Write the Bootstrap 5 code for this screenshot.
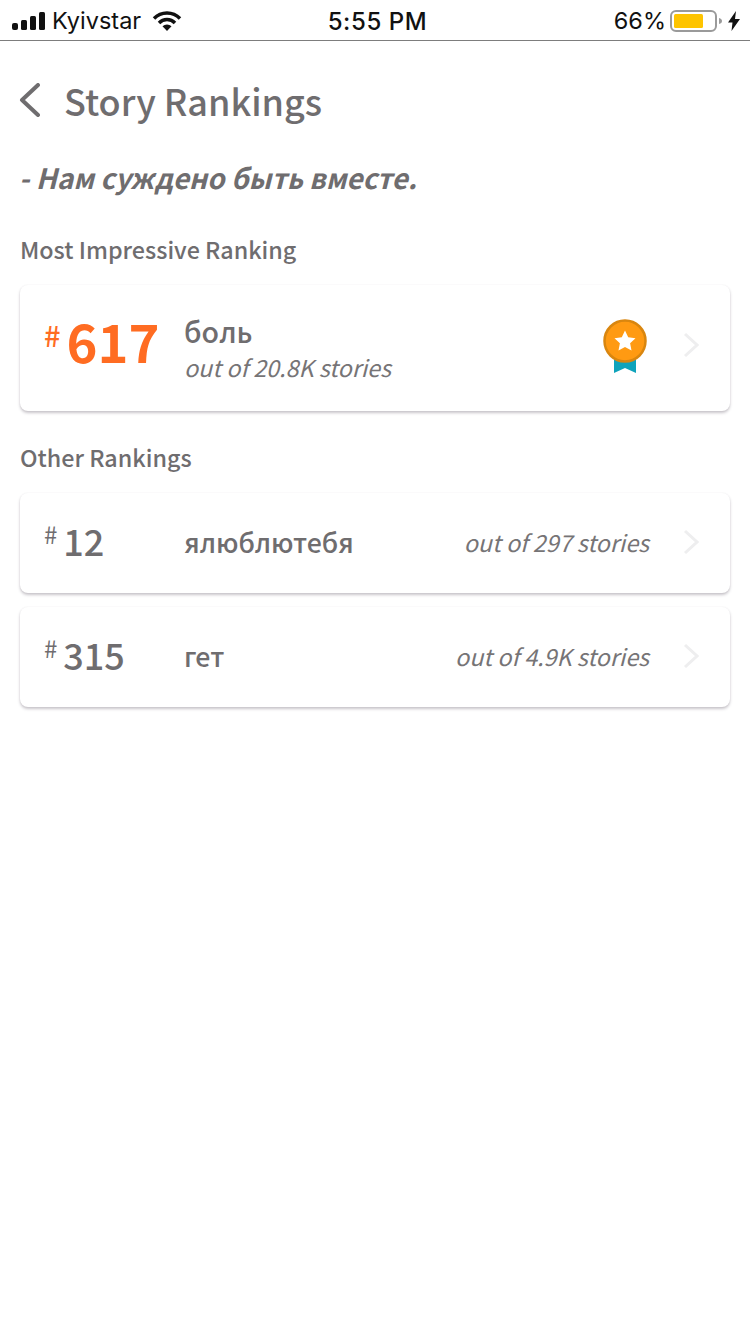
<!DOCTYPE html>
<html lang="en">
<head>
  <meta charset="UTF-8" />
  <title>Story Rankings</title>
  <link href="https://cdn.jsdelivr.net/npm/bootstrap@5.3.0/dist/css/bootstrap.min.css" rel="stylesheet" />
  <style>
    body {
      background-color: #fff;
      color: #6f6d6f;
      font-family: "Noto Sans CJK SC", "Noto Sans", sans-serif;
      padding-bottom: 40px;
    }
    .status-bar {
      height: 41px;
      padding: 1px 10px 0 12px;
      border-bottom: 1px solid #7d7d7d;
      color: #111;
      font-family: "Inter", "Liberation Sans", sans-serif;
      font-size: 23.5px;
      line-height: 38px;
    }
    .status-side { width: 250px; }
    .status-time { font-size: 24px; font-weight: 500; letter-spacing: .6px; padding: 2px 0 0 3px; }
    .wifi-gap { margin-left: 11px; }
    .battery-gap { margin-left: 4px; }
    .bolt-gap { margin-left: 6px; }
    .page-title {
      font-size: 36px;
      font-weight: 500;
      line-height: 48px;
      margin: 0;
    }
    .title-bar {
      padding: 35px 20px 0 18px;
      gap: 24px;
    }
    .story-name {
      font-size: 27.9px;
      font-style: italic;
      font-weight: 700;
      line-height: 36px;
      margin: 35px 0 0 19px;
    }
    .section-label {
      font-size: 23.3px;
      font-weight: 500;
      line-height: 32px;
      margin: 38px 0 20px 20px;
    }
    .section-second { margin-top: 30px; }
    .rank-box {
      background: #fff;
      border: 0;
      border-radius: 8px;
      box-shadow: 0 2px 3px rgba(60, 50, 70, .28), 0 0 2px rgba(60, 50, 70, .06);
      margin: 0 20px;
      padding: 0 31px 0 24px;
    }
    .rank-main { height: 126px; }
    .rank-other { height: 100px; }
    .rank-other + .rank-other { margin-top: 14px; }
    .rank-num {
      width: 140px;
      flex-shrink: 0;
      font-weight: 500;
      font-size: 36px;
      line-height: 1;
      margin-bottom: 6px;
    }
    .rank-num sup {
      font-size: 24px;
      font-weight: 400;
      top: -12px;
      vertical-align: baseline;
      position: relative;
      margin-right: 6px;
    }
    .rank-main .rank-num {
      color: #ff6c22;
      font-size: 52.5px;
      font-weight: 700;
      margin-bottom: 16px;
    }
    .rank-main .rank-num sup { font-size: 29px; font-weight: 500; top: -16px; margin-right: 6px; }
    .tag-name { font-size: 26.7px; font-weight: 500; line-height: 34px; margin-bottom: 2px; }
    .rank-main .tag-name { font-size: 28.5px; margin-bottom: 0; }
    .out-of { font-size: 23.3px; font-style: italic; line-height: 34px; font-weight: 400; color: #767476; margin-bottom: 2px; }
    .rank-main .out-of { margin: 2px 0 0; }
    .tag-block { margin-top: 2px; }
    .chev-gap { margin-left: 34px; margin-bottom: 2px; }
    .medal-gap { margin-right: 36px; margin-bottom: 2px; }
    .chev-main { margin-bottom: 6px; }
  </style>
</head>
<body>

<div class="status-bar d-flex justify-content-between align-items-center">
  <div class="status-side d-flex align-items-center">
    <svg width="36" height="18" viewBox="0 0 36 18"><rect x="0" y="11" width="6" height="7" rx="2" fill="#111"/><rect x="9" y="8" width="6" height="10" rx="1.5" fill="#111"/><rect x="18" y="4" width="6" height="14" rx="1.5" fill="#111"/><rect x="27" y="0" width="6" height="18" rx="1.5" fill="#111"/></svg>
    <span class="ms-1">Kyivstar</span>
    <svg class="wifi-gap" width="30" height="22" viewBox="0 0 30 22"><path d="M2 8.5a18 18 0 0 1 26 0" fill="none" stroke="#111" stroke-width="3.4"/><path d="M7 13a11 11 0 0 1 16 0" fill="none" stroke="#111" stroke-width="3.4"/><path d="M15 21l-4.500-4.700a6.500 6.500 0 0 1 9 0z" fill="#111"/></svg>
  </div>
  <div class="status-time">5:55 PM</div>
  <div class="status-side d-flex align-items-center justify-content-end">
    <span>66%</span>
    <svg class="battery-gap" width="52" height="24" viewBox="0 0 52 24"><rect x="1" y="2" width="45" height="20" rx="5" fill="#fff" stroke="#9a9a9a" stroke-width="2"/><rect x="4" y="5" width="29" height="14" rx="1.500" fill="#fec400"/><path d="M49 9c2 .5 3 1.500 3 3s-1 2.500-3 3z" fill="#9a9a9a"/></svg>
    <svg class="bolt-gap" width="12" height="20" viewBox="0 0 12 20"><path d="M8 0 0 11.500h4.500L3.500 20 12 8H7z" fill="#111"/></svg>
  </div>
</div>

<div class="title-bar d-flex align-items-center">
  <svg width="22" height="34" viewBox="0 0 22 34"><path d="M20 2 4 17l16 15" fill="none" stroke="#6f6d6f" stroke-width="4" stroke-linecap="round" stroke-linejoin="round"/></svg>
  <h1 class="page-title">Story Rankings</h1>
</div>

<p class="story-name">- Нам суждено быть вместе.</p>

<h2 class="section-label section-first">Most Impressive Ranking</h2>
<div class="card rank-box rank-main flex-row align-items-center">
  <div class="rank-num"><sup>#</sup>617</div>
  <div class="tag-block flex-grow-1">
    <div class="tag-name">боль</div>
    <div class="out-of">out of 20.8K stories</div>
  </div>
  <svg class="medal-gap" width="44" height="56" viewBox="0 0 44 56">
    <path d="M11 30h22v24l-11-5-11 5z" fill="#0fa3bb"/>
    <circle cx="22" cy="22" r="20.500" fill="#ff9a12" stroke="#d9860f" stroke-width="2.500"/>
    <path d="M22 11.500l3.200 6.800 7.300.9-5.400 5 1.400 7.300-6.500-3.600-6.500 3.600 1.400-7.300-5.400-5 7.300-.9z" fill="#fff"/>
  </svg>
  <svg class="chev-main" width="16" height="26" viewBox="0 0 16 26"><path d="M2 2l12 11L2 24" fill="none" stroke="#eeeeef" stroke-width="3"/></svg>
</div>

<h2 class="section-label section-second">Other Rankings</h2>
<div class="card rank-box rank-other flex-row align-items-center">
  <div class="rank-num"><sup>#</sup>12</div>
  <div class="tag-name flex-grow-1">ялюблютебя</div>
  <div class="out-of">out of 297 stories</div>
  <svg class="chev-gap" width="16" height="26" viewBox="0 0 16 26"><path d="M2 2l12 11L2 24" fill="none" stroke="#eeeeef" stroke-width="3"/></svg>
</div>
<div class="card rank-box rank-other flex-row align-items-center">
  <div class="rank-num"><sup>#</sup>315</div>
  <div class="tag-name flex-grow-1">гет</div>
  <div class="out-of">out of 4.9K stories</div>
  <svg class="chev-gap" width="16" height="26" viewBox="0 0 16 26"><path d="M2 2l12 11L2 24" fill="none" stroke="#eeeeef" stroke-width="3"/></svg>
</div>

<script src="https://cdn.jsdelivr.net/npm/bootstrap@5.3.0/dist/js/bootstrap.bundle.min.js"></script>
</body>
</html>
